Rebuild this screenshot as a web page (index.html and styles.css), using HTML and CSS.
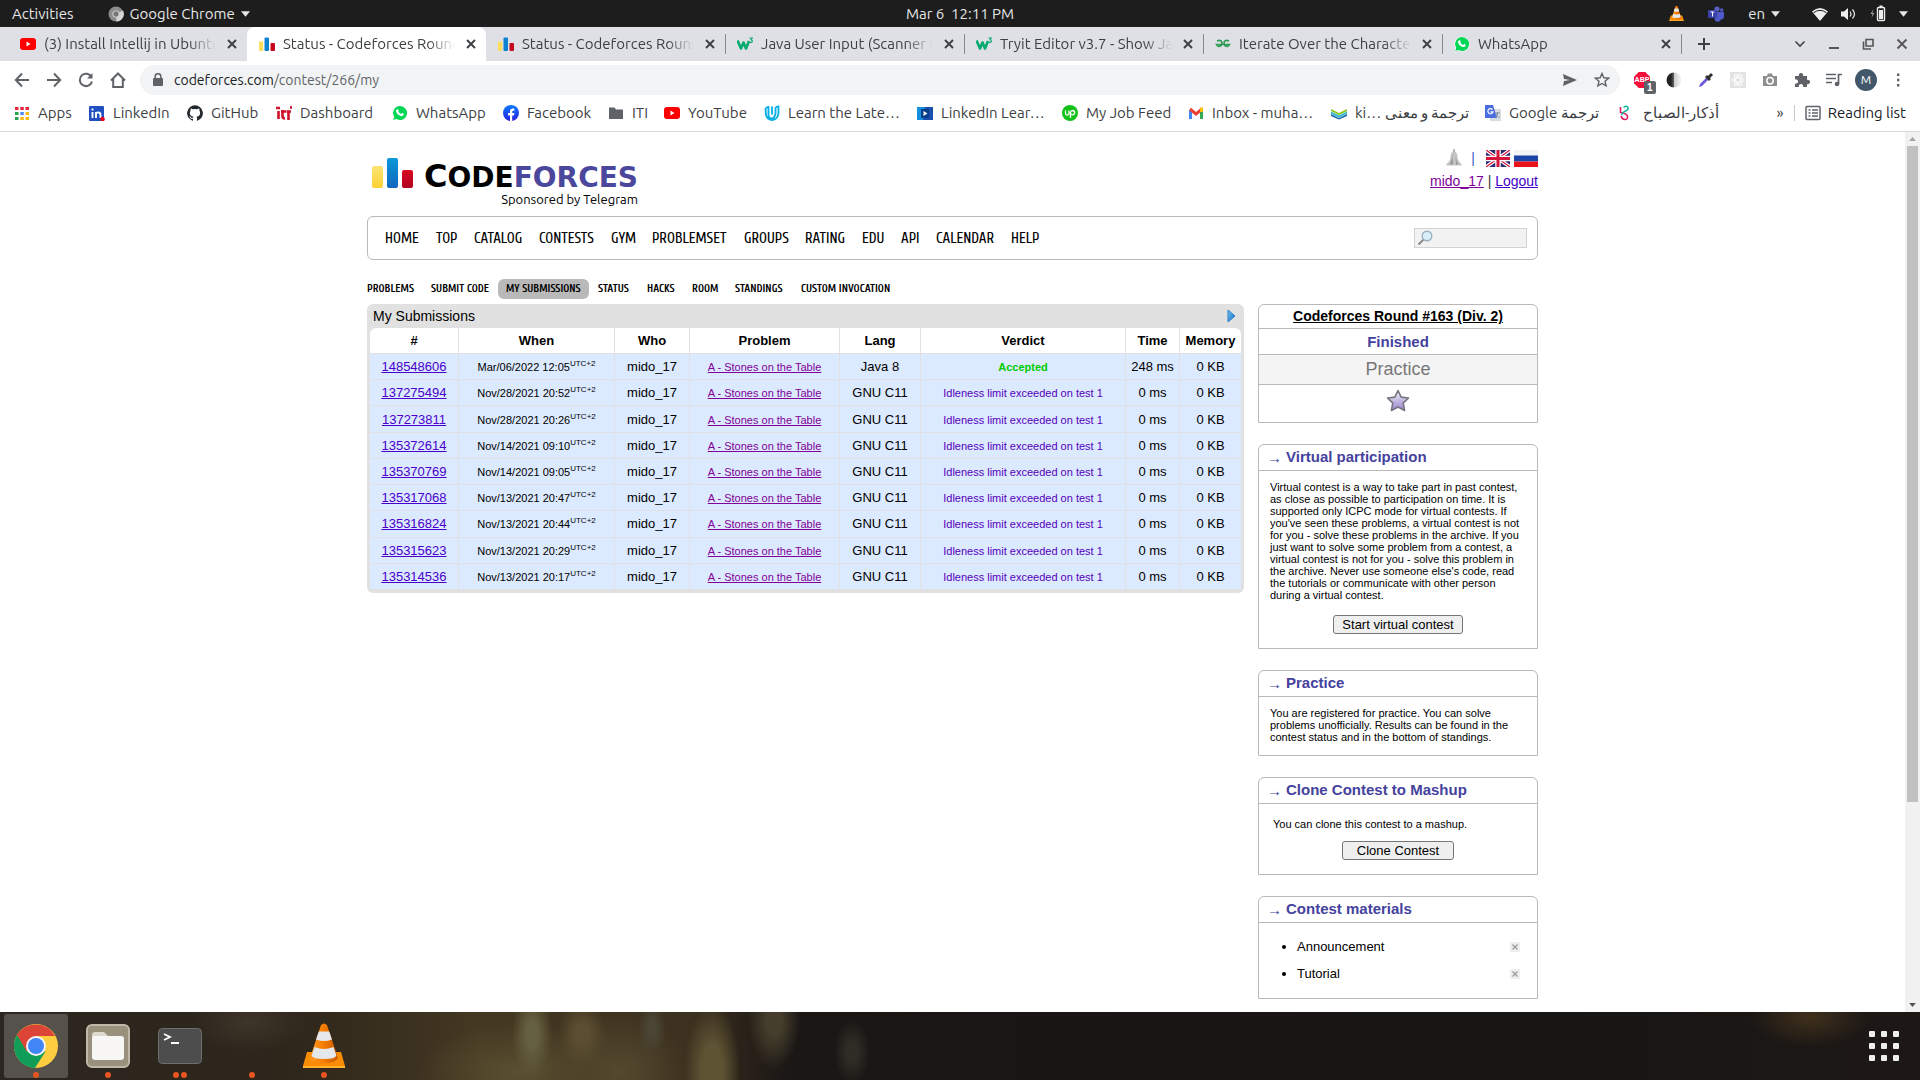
FILE: index.html
```html
<!DOCTYPE html>
<html lang="en">
<head>
<meta charset="utf-8">
<title>Status - Codeforces Round #163 (Div. 2)</title>
<link rel="stylesheet" href="styles.css">
</head>
<body>
<svg class="defs" aria-hidden="true">
  <defs>
    <linearGradient id="gy" x2="0" y2="1"><stop stop-color="#fbe576"/><stop offset="1" stop-color="#fbd033"/></linearGradient>
    <linearGradient id="gb" x2="0" y2="1"><stop stop-color="#0a97d9"/><stop offset="1" stop-color="#1267bd"/></linearGradient>
    <linearGradient id="gr" x2="0" y2="1"><stop stop-color="#d80a22"/><stop offset="1" stop-color="#b1031e"/></linearGradient>
    <linearGradient id="gstar" x2="0" y2="1"><stop stop-color="#efeff4"/><stop offset="1" stop-color="#9784d0"/></linearGradient>
    <linearGradient id="gfb" x2="0" y2="1"><stop stop-color="#0a7cff"/><stop offset="1" stop-color="#2a1fe0"/></linearGradient>
    <linearGradient id="gcone" x2="1" y2="0"><stop stop-color="#ff9a1f"/><stop offset=".5" stop-color="#f57c00"/><stop offset="1" stop-color="#c85a00"/></linearGradient>
    <linearGradient id="gtri" x2="1" y2="1"><stop stop-color="#7cc4f2"/><stop offset="1" stop-color="#0c6fc4"/></linearGradient>
    <linearGradient id="ghalf" x2="1" y2="0"><stop offset=".3" stop-color="#222"/><stop offset=".5" stop-color="#666"/><stop offset=".52" stop-color="#ccc"/><stop offset="1" stop-color="#f6f6f6"/></linearGradient>
  </defs>
  <symbol id="i-yt" viewBox="0 0 16 16"><rect y="2" width="16" height="12" rx="3" fill="#f00"/><path d="M6.5 5.5v5l4-2.500z" fill="#fff"/></symbol>
  <symbol id="i-cf" viewBox="0 0 16 16"><rect y="5.500" width="4.200" height="9.500" rx="1" fill="#fbdc5c"/><rect x="5.500" y="1.500" width="4.500" height="13.500" rx="1" fill="#0f82cf"/><rect x="11.500" y="7" width="4.500" height="8" rx="1" fill="#c60620"/></symbol>
  <symbol id="i-w3" viewBox="0 0 16 16"><path d="M.5 4.500l3.500 8 2.500-6 2.500 6 3-7.500" fill="none" stroke="#04aa6d" stroke-width="2.600" stroke-linejoin="round"/><path d="M12.500 2h3l-1.500 1.700q1.600.4 1.300 1.800-.6 1.300-2.600.7" fill="none" stroke="#04aa6d" stroke-width="1.100"/></symbol>
  <symbol id="i-gfg" viewBox="0 0 16 16"><path d="M2 5q3.500-1.500 4.800.8.600 2-.8 3.900Q2.800 11.500 1.500 8.500h13Q13.200 11.500 10 9.700 8.600 8 9.200 5.800q1.300-2.300 4.800-.8" fill="none" stroke="#2f9d56" stroke-width="1.700"/></symbol>
  <symbol id="i-wa" viewBox="0 0 16 16"><path d="M8 .5a7.500 7.500 0 1 1-3.700 14L.5 15.500l1-3.700A7.500 7.500 0 0 1 8 .5z" fill="#fff"/><path d="M8 1a7 7 0 1 1-3.500 13l-3.300.9 1-3.200A7 7 0 0 1 8 1z" fill="#00d757"/><path d="M5.300 4.200q1-.3 1.500 1.400l-.5 1q1 1.700 2.900 2.400l.8-.9q2 .5 1.700 1.300-.6 1.900-2.800 1.500-4-1.200-5-5 .2-1.500 1.400-1.700z" fill="#fff"/></symbol>
  <symbol id="i-x" viewBox="0 0 16 16"><path d="M4 4l8 8M12 4l-8 8" stroke="currentColor" stroke-width="1.900"/></symbol>
  <symbol id="i-vlc" viewBox="0 0 44 46"><path d="M5 29h34l4 14v2H1v-2z" fill="#f98c05"/><path d="M1 43h42v2H1z" fill="#ffb32c"/><path d="M19 2q3-3 6 0l11 33q-2 5-14 5T8 35z" fill="url(#gcone)"/><path d="M16.800 8.500h10.400l2.800 8q-8 3-16 0zM12.600 24q9.400 4 18.800 0l3 8.500q-1 3.500-12.400 3.500T9.600 32.500z" fill="#e4e8ea"/></symbol>
  <symbol id="i-caret" viewBox="0 0 10 6"><path d="M0 0h10L5 6z" fill="currentColor"/></symbol>
</svg>

<header class="topbar">
  <div class="topbar-left">
    <a href="#">Activities</a>
    <a href="#" class="appmenu"><svg width="16" height="16" viewBox="0 0 16 16"><circle cx="8" cy="8" r="7.500" fill="#8c8c8c"/><path d="M8 8l7-3.500A7.500 7.500 0 0 1 8.500 15.500z" fill="#d5d5d5"/><circle cx="8" cy="8" r="3.600" fill="#ddd"/><circle cx="8" cy="8" r="2.700" fill="#777"/></svg>Google Chrome<svg width="9" height="6"><use href="#i-caret"/></svg></a>
  </div>
  <time>Mar 6&nbsp; 12:11 PM</time>
  <div class="tray">
    <svg class="vlc" width="15" height="17"><use href="#i-vlc"/></svg>
    <svg class="teams" width="16" height="16" viewBox="0 0 16 16"><circle cx="9" cy="3" r="2.600" fill="#5b62c4"/><circle cx="13.700" cy="4" r="1.800" fill="#5059c9"/><path d="M6 6h10v5q-1 3-3 2.500Q11 17 7 15z" fill="#5059c9"/><rect y="4" width="9" height="8" rx="1" fill="#3a41a8"/><path d="M2.500 6h4M4.500 6v4.500" stroke="#fff"/></svg>
    <span class="lang">en<svg width="9" height="6"><use href="#i-caret"/></svg></span>
    <svg class="wifi" width="16" height="14" viewBox="0 0 16 14"><path d="M0 4.500Q8-2.500 16 4.500L8 14z" fill="#eee"/><path d="M1.500 5.800Q8 .8 14.500 5.800" fill="none" stroke="#1d1d1d"/></svg>
    <svg width="16" height="14" viewBox="0 0 16 14"><path d="M0 4.500h3L7 1v12L3 9.500H0z" fill="#eee"/><path d="M9 4.500q2 2.500 0 5M11.500 2.500q4 4.500 0 9" fill="none" stroke="#eee" stroke-width="1.200"/></svg>
    <svg width="16" height="17" viewBox="0 0 16 17"><path d="M3.500 4L.500 9h2l-1 4 3-5h-2z" fill="#999"/><rect x="7.500" y="2.500" width="7" height="13" rx="1" fill="none" stroke="#eee" stroke-width="1.400"/><path d="M9 5h4v9H9zM9.500.500h3v1.500h-3z" fill="#eee"/></svg>
    <svg width="9" height="6"><use href="#i-caret"/></svg>
  </div>
</header>

<div class="tabstrip">
  <div class="tab"><svg class="fav"><use href="#i-yt"/></svg><span>(3) Install Intellij in Ubuntu</span><svg class="close"><use href="#i-x"/></svg></div>
  <div class="tab active"><svg class="fav"><use href="#i-cf"/></svg><span>Status - Codeforces Round</span><svg class="close"><use href="#i-x"/></svg></div>
  <div class="tab"><svg class="fav"><use href="#i-cf"/></svg><span>Status - Codeforces Round</span><svg class="close"><use href="#i-x"/></svg></div>
  <div class="tab line"><svg class="fav"><use href="#i-w3"/></svg><span>Java User Input (Scanner c</span><svg class="close"><use href="#i-x"/></svg></div>
  <div class="tab line"><svg class="fav"><use href="#i-w3"/></svg><span>Tryit Editor v3.7 - Show Jav</span><svg class="close"><use href="#i-x"/></svg></div>
  <div class="tab line"><svg class="fav"><use href="#i-gfg"/></svg><span>Iterate Over the Character</span><svg class="close"><use href="#i-x"/></svg></div>
  <div class="tab line"><svg class="fav"><use href="#i-wa"/></svg><span>WhatsApp</span><svg class="close"><use href="#i-x"/></svg></div>
  <div class="newtab"><svg width="14" height="14" viewBox="0 0 14 14"><path d="M7 1v12M1 7h12" stroke="#3c4043" stroke-width="2"/></svg></div>
  <div class="winctl">
    <svg width="12" height="12" viewBox="0 0 12 12"><path d="M1.500 3.500L6 8l4.500-4.500" fill="none" stroke="#444" stroke-width="1.600"/></svg>
    <svg width="12" height="12" viewBox="0 0 12 12"><path d="M1 10h10" stroke="#555" stroke-width="2"/></svg>
    <svg width="12" height="12" viewBox="0 0 12 12"><path d="M4 1.500h7v6.500H4zM1.500 3.500V11H9" fill="none" stroke="#555" stroke-width="1.600"/></svg>
    <svg width="12" height="12" viewBox="0 0 12 12"><path d="M1.500 1.500l9 9M10.500 1.500l-9 9" stroke="#555" stroke-width="1.800"/></svg>
  </div>
</div>

<div class="toolbar">
  <svg class="nav" viewBox="0 0 16 16"><path d="M15 8H2M8 1.500L1.800 8 8 14.500"/></svg>
  <svg class="nav" viewBox="0 0 16 16"><path d="M1 8h13M8 1.500L14.200 8 8 14.500"/></svg>
  <svg class="nav" viewBox="0 0 16 16"><path d="M13.500 5A6.200 6.200 0 1 0 14 9.500"/><path d="M14.500 1v5.500H9z" fill="#5f6368" stroke="none"/></svg>
  <svg class="nav" viewBox="0 0 16 16"><path d="M1 8.500L8 1.500l7 7M3.200 7v8h9.600V7"/></svg>
  <div class="omnibox">
    <svg width="10" height="14" viewBox="0 0 10 14"><rect y="5" width="10" height="8" rx="1" fill="#5f6368"/><path d="M2.200 6V3.500a2.800 2.800 0 0 1 5.600 0V6" fill="none" stroke="#5f6368" stroke-width="1.500"/></svg>
    <span class="url"><b>codeforces.com</b>/contest/266/my</span>
    <svg width="16" height="14" viewBox="0 0 16 14"><path d="M1 1l14 6L1 13l1-5 6-1-6-1z" fill="#5f6368"/></svg>
    <svg width="16" height="16" viewBox="0 0 16 16"><path d="M8 1.500l1.900 4.300 4.700.4-3.600 3.100 1.100 4.600L8 11.500l-4.100 2.400L5 9.300 1.400 6.200l4.700-.4z" fill="none" stroke="#5f6368" stroke-width="1.400"/></svg>
  </div>
  <div class="exts">
    <div class="abp"><svg width="17" height="17" viewBox="0 0 17 17"><path d="M5 0h7l5 5v7l-5 5H5l-5-5V5z" fill="#f5103c"/></svg><i>ABP</i><em>1</em></div>
    <svg viewBox="0 0 16 16"><circle cx="8" cy="8" r="7.500" fill="url(#ghalf)"/></svg>
    <svg viewBox="0 0 16 16"><path d="M1 15l1-3 7-7 2 2-7 7z" fill="#6a5bd8"/><path d="M8 4l4 4M10 6l4-4" stroke="#333" stroke-width="3"/></svg>
    <svg viewBox="0 0 16 16"><rect width="16" height="16" fill="#e3e3e3"/><g fill="none" stroke="#fff"><ellipse cx="8" cy="8" rx="6" ry="2.400"/><ellipse cx="8" cy="8" rx="6" ry="2.400" transform="rotate(60 8 8)"/><ellipse cx="8" cy="8" rx="6" ry="2.400" transform="rotate(120 8 8)"/></g></svg>
    <svg viewBox="0 0 16 16"><path d="M1 4h4l1-2.500h4L11 4h4v10H1z" fill="#8e8e8e"/><circle cx="8" cy="8.800" r="3.200" fill="#8e8e8e" stroke="#fff" stroke-width="1.500"/></svg>
    <svg viewBox="0 0 16 16"><path d="M1 4h4a2.200 2.200 0 1 1 4 0h4v4a2.200 2.200 0 1 1 0 4v3H9a2.200 2.200 0 1 0-4 0H1v-3.500a2.200 2.200 0 1 0 0-4z" fill="#5f6368"/></svg>
    <svg viewBox="0 0 16 16"><path d="M0 2.500h10M0 6.500h10M0 10.500h6M12.500 12V2.500H16" fill="none" stroke="#5f6368" stroke-width="1.700"/><circle cx="11" cy="12" r="2.300" fill="#5f6368"/></svg>
    <span class="avatar">M</span>
    <svg viewBox="0 0 16 16"><path d="M7 1.500h2.400v2.400H7zM7 6.800h2.400v2.400H7zM7 12.100h2.400v2.400H7z" fill="#5f6368"/></svg>
  </div>
</div>

<nav class="bookmarks">
  <a href="#"><svg viewBox="0 0 16 16"><path d="M1 2h3.500v3H1zM6.300 2h3.500v3H6.300zM11.500 2H15v3h-3.500z" fill="#e8243c"/><path d="M1 7h3.500v3H1zM1 12h3.500v3H1z" fill="#26a251"/><path d="M6.300 7h3.500v3H6.300z" fill="#4c8bf5"/><path d="M11.500 7H15v3h-3.500zM6.300 12h3.500v3H6.300zM11.500 12H15v3h-3.500z" fill="#fbb911"/></svg>Apps</a>
  <a href="#"><svg viewBox="0 0 16 16"><rect width="15" height="15" y="1" rx="1" fill="#1f4fc0"/><path d="M3.500 7v6M3.500 3.500v2M7 13V7M7 10q0-3 2.500-2.500 2 0 2 2.500v3" fill="none" stroke="#fff" stroke-width="1.900"/><circle cx="13.500" cy="14" r="2.300" fill="#e60023"/></svg>LinkedIn</a>
  <a href="#"><svg viewBox="0 0 16 16"><path d="M8 .3a7.900 7.900 0 0 0-2.500 15.400c.4.100.5-.2.500-.4v-1.500c-2.200.5-2.700-.9-2.700-.9-.4-.9-.9-1.200-.9-1.200-.7-.5.100-.5.100-.5.800.1 1.200.8 1.200.8.700 1.200 1.900.9 2.300.7.100-.5.300-.9.500-1.100-1.800-.2-3.600-.9-3.600-3.900 0-.9.300-1.600.8-2.100-.1-.2-.4-1 .1-2.100 0 0 .7-.2 2.200.8a7.500 7.500 0 0 1 4 0c1.500-1 2.200-.8 2.200-.8.400 1.100.2 1.900.1 2.100.5.600.8 1.300.8 2.100 0 3.100-1.900 3.700-3.700 3.900.3.300.6.800.6 1.500v2.200c0 .2.100.5.500.4A7.900 7.900 0 0 0 8 .3z" fill="#24292e"/></svg>GitHub</a>
  <a href="#"><svg viewBox="0 0 16 16"><path d="M2.500 6v8M0 3h4M6.500 5v6q0 2.500 2.500 2.500M5 6.500h5M12.500 7v8M10.500 6.500h4.500M14 2.500h2" fill="none" stroke="#d0112b" stroke-width="2.600"/></svg>Dashboard</a>
  <a href="#"><svg><use href="#i-wa"/></svg>WhatsApp</a>
  <a href="#"><svg viewBox="0 0 16 16"><circle cx="8" cy="8" r="8" fill="url(#gfb)"/><path d="M7 16v-5.500H5V8h2V6.300Q7.100 3.500 9.800 3.500h1.600v2.200h-1.200q-1 0-1 1V8h2.200l-.4 2.500H9.200V16z" fill="#fff"/></svg>Facebook</a>
  <a href="#"><svg viewBox="0 0 16 16"><path d="M1 2.500h5.500l1.500 2h7v9.500H1z" fill="#5f6368"/></svg>ITI</a>
  <a href="#"><svg><use href="#i-yt"/></svg>YouTube</a>
  <a href="#"><svg viewBox="0 0 16 16"><path d="M1.500 4q1.500-2.500 3-2v7.500q0 4 3 4t4-5V3q1.500-2 3-1.500V8q-.5 6-6 7-5 0-6.500-5zM8 1.500v8" fill="none" stroke="#0bb0e6" stroke-width="1.900"/></svg>Learn the Late…</a>
  <a href="#"><svg viewBox="0 0 16 16"><rect y="2" width="16" height="13" fill="#1490df"/><path d="M8 2h8v13H6z" fill="#1b4fae"/><rect x="4" y="4" width="8" height="9" fill="#073f86"/><path d="M6.500 6v5l4-2.500z" fill="#fff"/></svg>LinkedIn Lear…</a>
  <a href="#"><svg viewBox="0 0 16 16"><circle cx="8" cy="8" r="8" fill="#14c01a"/><path d="M3.500 5.500v3q.2 1.700 1.800 1.700 1.500 0 1.700-1.700v-3M8.500 13V7.500q.3-2 2.200-2 2 .2 2 2.200-.2 2-2 2.100-1.500 0-2.800-2.300" fill="none" stroke="#fff" stroke-width="1.300"/></svg>My Job Feed</a>
  <a href="#"><svg viewBox="0 0 16 16"><path d="M2.500 14V5" stroke="#4285f4" stroke-width="3"/><path d="M13.500 14V5" stroke="#34a853" stroke-width="3"/><path d="M2 4l6 5 6-5" fill="none" stroke="#ea4335" stroke-width="3"/><path d="M12 2.500h3V7h-3z" fill="#fbbc04"/></svg>Inbox - muha…</a>
  <a href="#"><svg viewBox="0 0 16 16"><path d="M0 4l8 4 8-4v2l-8 4-8-4z" fill="#8fc31f"/><path d="M0 6.500l8 4 8-4v2l-8 4-8-4z" fill="#29b6c8"/><path d="M0 9l8 4 8-4v2l-8 3.500L0 11z" fill="#1565a8"/></svg>ki… ترجمة و معنى</a>
  <a href="#"><svg viewBox="0 0 16 16"><rect x="5" y="4" width="11" height="12" fill="#d8dce0"/><path d="M0 0h8l4 13H0z" fill="#4a6ee0"/><path d="M7.500 4.500A2.600 2.600 0 1 0 8 6.800H5.500" fill="none" stroke="#fff" stroke-width="1.200"/><path d="M10 8h5M12.500 7v1q0 3-2 4.500M11 9q1 2 3.500 3.500" fill="none" stroke="#8090a0"/></svg><span dir="rtl">ترجمة Google</span></a>
  <a href="#"><svg viewBox="0 0 16 16"><path d="M1.500 2v5.500q5.500.5 7 3.500.5 3.500-2.500 3.500T2 11" fill="none" stroke="#e0205c" stroke-width="1.600"/><path d="M2.500 10q1-3 4-4t2.500-3.500Q7.500 0 4.500 2.500" fill="none" stroke="#12b5a6" stroke-width="1.500"/></svg>أذكار-الصباح</a>
  <span class="more">»</span>
  <a href="#" class="reading"><svg viewBox="0 0 16 16"><rect x="1" y="1.500" width="14" height="13" rx="1" fill="none" stroke="#5f6368" stroke-width="1.500"/><path d="M3.500 5h2M7 5h6M3.500 8h2M7 8h6M3.500 11h2M7 11h6" stroke="#5f6368" stroke-width="1.300"/></svg>Reading list</a>
</nav>

<div class="viewport">
<div class="page">
  <header class="site-head">
    <a href="#" class="logo">
      <svg width="41" height="31" viewBox="0 0 41 31"><rect y="8" width="11" height="22" rx="2" fill="url(#gy)"/><rect x="15" width="11" height="30" rx="2" fill="url(#gb)"/><rect x="30" y="12" width="11" height="18" rx="2" fill="url(#gr)"/></svg>
      <span class="logo-text"><span class="word"><span class="cap">C</span>ODE<span class="blue">FORCES</span></span><span class="sponsor">Sponsored by Telegram</span></span>
    </a>
    <div class="account">
      <div class="flags">
        <svg width="16" height="18" viewBox="0 0 16 18"><path d="M8 2q3.500 1 3.500 6 .3 4 4 7v1.500H.500V15q3.700-3 4-7 0-5 3.500-6z" fill="#c4c4c4"/><path d="M6.500 4q0 7-3 11.500h3.500zM9.500 4q0 7 3 11.500H10z" fill="#999"/><path d="M8 0v3" stroke="#aaa" stroke-width="1.500"/></svg>
        <span class="bar">|</span>
        <svg width="24" height="17" viewBox="0 0 24 17"><rect width="24" height="17" fill="#2d2a6e"/><path d="M0 0l24 17M24 0L0 17" stroke="#fff" stroke-width="3.500"/><path d="M0 0l24 17M24 0L0 17" stroke="#d8143a" stroke-width="1.200"/><path d="M12 0v17M0 8.500h24" stroke="#fff" stroke-width="5.500"/><path d="M12 0v17M0 8.500h24" stroke="#d8143a" stroke-width="3"/></svg>
        <svg width="24" height="17" viewBox="0 0 24 17"><rect width="24" height="17" fill="#f4f4f6"/><path d="M0 5.500h24v6H0z" fill="#1c45a8"/><path d="M0 11.500h24V17H0z" fill="#e8121a"/></svg>
      </div>
      <div><a href="#" class="visited">mido_17</a> | <a href="#">Logout</a></div>
    </div>
  </header>

  <div class="mainmenu">
    <nav><a href="#">HOME</a><a href="#">TOP</a><a href="#">CATALOG</a><a href="#">CONTESTS</a><a href="#">GYM</a><a href="#">PROBLEMSET</a><a href="#">GROUPS</a><a href="#">RATING</a><a href="#">EDU</a><a href="#">API</a><a href="#">CALENDAR</a><a href="#">HELP</a></nav>
    <label class="search"><svg width="16" height="16" viewBox="0 0 16 16"><path d="M1.500 14.500L7 9" stroke="#8a8a8a" stroke-width="2"/><circle cx="10" cy="6" r="4.800" fill="#d8f0fb" stroke="#9bb0bd" stroke-width="1.400"/></svg><input type="text" aria-label="Search"></label>
  </div>

  <nav class="submenu"><a href="#">PROBLEMS</a><a href="#">SUBMIT CODE</a><a href="#" class="current">MY SUBMISSIONS</a><a href="#">STATUS</a><a href="#">HACKS</a><a href="#">ROOM</a><a href="#">STANDINGS</a><a href="#">CUSTOM INVOCATION</a></nav>

  <div class="columns">
    <main class="datatable">
      <div class="caption"><span>My Submissions</span><svg width="9" height="14" viewBox="0 0 9 14"><path d="M1 1l7 6-7 6z" fill="url(#gtri)" stroke="#2a7fc9"/></svg></div>
      <table>
        <colgroup><col class="c-id"><col class="c-when"><col class="c-who"><col class="c-problem"><col class="c-lang"><col><col class="c-time"><col class="c-mem"></colgroup>
        <thead><tr><th>#</th><th>When</th><th>Who</th><th>Problem</th><th>Lang</th><th>Verdict</th><th>Time</th><th>Memory</th></tr></thead>
        <tbody>
          <tr><td><a href="#">148548606</a></td><td class="small">Mar/06/2022 12:05<sup>UTC+2</sup></td><td>mido_17</td><td class="small"><a href="#" class="visited">A - Stones on the Table</a></td><td>Java 8</td><td class="small ok">Accepted</td><td>248 ms</td><td>0 KB</td></tr>
          <tr><td><a href="#">137275494</a></td><td class="small">Nov/28/2021 20:52<sup>UTC+2</sup></td><td>mido_17</td><td class="small"><a href="#" class="visited">A - Stones on the Table</a></td><td>GNU C11</td><td class="small fail">Idleness limit exceeded on test 1</td><td>0 ms</td><td>0 KB</td></tr>
          <tr><td><a href="#">137273811</a></td><td class="small">Nov/28/2021 20:26<sup>UTC+2</sup></td><td>mido_17</td><td class="small"><a href="#" class="visited">A - Stones on the Table</a></td><td>GNU C11</td><td class="small fail">Idleness limit exceeded on test 1</td><td>0 ms</td><td>0 KB</td></tr>
          <tr><td><a href="#">135372614</a></td><td class="small">Nov/14/2021 09:10<sup>UTC+2</sup></td><td>mido_17</td><td class="small"><a href="#" class="visited">A - Stones on the Table</a></td><td>GNU C11</td><td class="small fail">Idleness limit exceeded on test 1</td><td>0 ms</td><td>0 KB</td></tr>
          <tr><td><a href="#">135370769</a></td><td class="small">Nov/14/2021 09:05<sup>UTC+2</sup></td><td>mido_17</td><td class="small"><a href="#" class="visited">A - Stones on the Table</a></td><td>GNU C11</td><td class="small fail">Idleness limit exceeded on test 1</td><td>0 ms</td><td>0 KB</td></tr>
          <tr><td><a href="#">135317068</a></td><td class="small">Nov/13/2021 20:47<sup>UTC+2</sup></td><td>mido_17</td><td class="small"><a href="#" class="visited">A - Stones on the Table</a></td><td>GNU C11</td><td class="small fail">Idleness limit exceeded on test 1</td><td>0 ms</td><td>0 KB</td></tr>
          <tr><td><a href="#">135316824</a></td><td class="small">Nov/13/2021 20:44<sup>UTC+2</sup></td><td>mido_17</td><td class="small"><a href="#" class="visited">A - Stones on the Table</a></td><td>GNU C11</td><td class="small fail">Idleness limit exceeded on test 1</td><td>0 ms</td><td>0 KB</td></tr>
          <tr><td><a href="#">135315623</a></td><td class="small">Nov/13/2021 20:29<sup>UTC+2</sup></td><td>mido_17</td><td class="small"><a href="#" class="visited">A - Stones on the Table</a></td><td>GNU C11</td><td class="small fail">Idleness limit exceeded on test 1</td><td>0 ms</td><td>0 KB</td></tr>
          <tr><td><a href="#">135314536</a></td><td class="small">Nov/13/2021 20:17<sup>UTC+2</sup></td><td>mido_17</td><td class="small"><a href="#" class="visited">A - Stones on the Table</a></td><td>GNU C11</td><td class="small fail">Idleness limit exceeded on test 1</td><td>0 ms</td><td>0 KB</td></tr>
        </tbody>
      </table>
    </main>

    <aside class="sidebar">
      <section class="box contest">
        <a href="#" class="contest-name">Codeforces Round #163 (Div. 2)</a>
        <div class="state">Finished</div>
        <div class="mode">Practice</div>
        <div class="star"><svg width="24" height="24" viewBox="0 0 24 24"><path d="M12 1.500l3.200 6.600 7.300.9-5.300 5.100 1.400 7.400L12 18l-6.600 3.500 1.400-7.400L1.500 9l7.300-.9z" fill="url(#gstar)" stroke="#77757f" stroke-width="1.600" stroke-linejoin="round"/></svg></div>
      </section>
      <section class="box">
        <h2><i>→</i>Virtual participation</h2>
        <div class="body virtual">
          <p>Virtual contest is a way to take part in past contest, as close as possible to participation on time. It is supported only ICPC mode for virtual contests. If you've seen these problems, a virtual contest is not for you - solve these problems in the archive. If you just want to solve some problem from a contest, a virtual contest is not for you - solve this problem in the archive. Never use someone else's code, read the tutorials or communicate with other person during a virtual contest.</p>
          <button type="button">Start virtual contest</button>
        </div>
      </section>
      <section class="box">
        <h2><i>→</i>Practice</h2>
        <div class="body"><p>You are registered for practice. You can solve problems unofficially. Results can be found in the contest status and in the bottom of standings.</p></div>
      </section>
      <section class="box">
        <h2><i>→</i>Clone Contest to Mashup</h2>
        <div class="body clone"><p>You can clone this contest to a mashup.</p><button type="button">Clone Contest</button></div>
      </section>
      <section class="box">
        <h2><i>→</i>Contest materials</h2>
        <ul>
          <li><div><a href="#">Announcement</a><svg><use href="#i-x"/></svg></div></li>
          <li><div><a href="#">Tutorial</a><svg><use href="#i-x"/></svg></div></li>
        </ul>
      </section>
    </aside>
  </div>
</div>
<div class="scrollbar"><svg width="7" height="4" viewBox="0 0 10 6"><path d="M0 6h10L5 0z" fill="#a3a3a3"/></svg><div class="thumb"></div><svg width="7" height="4"><use href="#i-caret"/></svg></div>
</div>

<footer class="dock">
  <div class="app on"><svg width="44" height="44" viewBox="0 0 44 44"><circle cx="22" cy="22" r="22" fill="#ffcd40"/><path d="M2.950 11A22 22 0 0 0 21 44l10.500-16.500H13z" fill="#0f9d58"/><path d="M2.950 11A22 22 0 0 1 41.050 12H22L12.500 27.500z" fill="#db4437"/><path d="M2.950 11l9.550 16.500 4 4-10 4z" fill="#0f9d58"/><circle cx="22" cy="22" r="10" fill="#f4f4f4"/><circle cx="22" cy="22" r="8" fill="#4285f4"/></svg><div class="dots"><b></b></div></div>
  <div class="app"><svg width="44" height="44" viewBox="0 0 44 44"><rect x="1" y="1" width="42" height="42" rx="5" fill="#9a917c" stroke="#c0b9a9" stroke-width="2"/><path d="M6 11q0-3 3-3h9l4 4v6H6z" fill="#dedad0"/><rect x="6" y="12" width="32" height="24" rx="3" fill="#f8f7f5"/></svg><div class="dots"><b></b></div></div>
  <div class="app"><svg width="44" height="44" viewBox="0 0 44 44"><rect x=".5" y="4.500" width="43" height="35" rx="4" fill="#4d4d4d" stroke="#6f6f6f"/><path d="M6 10l6 3-6 3M13 19h8" fill="none" stroke="#fff" stroke-width="1.800"/></svg><div class="dots"><b></b><b></b></div></div>
  <div class="app"><div class="dots"><b></b></div></div>
  <div class="app"><svg width="44" height="46"><use href="#i-vlc"/></svg><div class="dots"><b></b></div></div>
  <svg class="grid" width="30" height="30" viewBox="0 0 30 30" fill="#eee"><rect width="6" height="6" rx="1"/><rect x="12" width="6" height="6" rx="1"/><rect x="24" width="6" height="6" rx="1"/><rect y="12" width="6" height="6" rx="1"/><rect x="12" y="12" width="6" height="6" rx="1"/><rect x="24" y="12" width="6" height="6" rx="1"/><rect y="24" width="6" height="6" rx="1"/><rect x="12" y="24" width="6" height="6" rx="1"/><rect x="24" y="24" width="6" height="6" rx="1"/></svg>
</footer>
</body>
</html>
```
FILE: styles.css
```css
* { box-sizing: border-box; }
body {
  margin: 0;
  min-height: 100vh;
  display: flex;
  flex-direction: column;
  background: #fff;
  color: #000;
  font: 13px/16px "Liberation Sans", Arial, sans-serif;
}
a { color: inherit; text-decoration: none; }
svg { display: block; flex: none; }
.defs { width: 0; height: 0; position: absolute; }

/* desktop bar */
.topbar, .tabstrip, .toolbar, .bookmarks { font-family: Ubuntu, "Noto Sans", sans-serif; font-size: 15px; }
.topbar {
  display: grid;
  grid-template-columns: 1fr auto 1fr;
  align-items: center;
  height: 27px;
  padding: 0 12px;
  background: #1d1d1d;
  color: #e6e6e6;
}
.topbar-left, .appmenu, .tray, .lang { display: flex; align-items: center; }
.topbar-left { gap: 34px; }
.appmenu { gap: 6px; }
.tray { justify-content: flex-end; gap: 13px; }
.teams { margin: 0 11px; }
.lang { gap: 6px; margin-right: 19px; }

/* tabs */
.tabstrip { display: flex; height: 34px; padding-left: 8px; background: #dee0e6; color: #3c4043; }
.tab { flex: 0 1 239px; min-width: 0; display: flex; align-items: center; gap: 8px; padding: 0 7px 0 12px; }
.tab.active { background: #fff; border-radius: 8px 8px 0 0; }
.tab.line { background: linear-gradient(#85888c, #85888c) 0 50% / 1px 20px no-repeat; }
.tab span { flex: 1; overflow: hidden; white-space: nowrap; -webkit-mask-image: linear-gradient(90deg, #000 84%, transparent); mask-image: linear-gradient(90deg, #000 84%, transparent); }
.fav, .close { width: 16px; height: 16px; }
.newtab { display: flex; align-items: center; padding-left: 15px; border-left: 1px solid #85888c; margin: 7px 0; }
.winctl { margin-left: auto; display: flex; align-items: center; gap: 22px; padding-right: 12px; }

/* toolbar */
.toolbar { display: flex; align-items: center; height: 37px; padding: 0 14px; gap: 16px; }
.nav { width: 16px; height: 16px; fill: none; stroke: #5f6368; stroke-width: 2; }
.omnibox { flex: 1; min-width: 0; height: 30px; display: flex; align-items: center; gap: 16px; margin: 0 -2px; padding: 0 10px 0 13px; border-radius: 15px; background: #f1f3f4; color: #5f6368; font-size: 14px; }
.url { flex: 1; margin-left: -5px; }
.url b { font-weight: 400; color: #202124; }
.exts { display: flex; align-items: center; gap: 16px; }
.exts svg { width: 16px; height: 16px; }
.abp { position: relative; }
.abp i { position: absolute; inset: 4px 0 auto; font: bold 7px/8px "Liberation Sans", sans-serif; color: #fff; text-align: center; }
.abp em { position: absolute; left: 10px; top: 9px; padding: 0 3px; border-radius: 2px; background: #5f6368; color: #fff; font: bold 10px/13px "Liberation Sans", sans-serif; }
.avatar { width: 22px; height: 22px; margin: 0 -3px; border-radius: 50%; background: #42586a; color: #fff; font-size: 12px; line-height: 22px; text-align: center; }

/* bookmarks */
.bookmarks {
  display: grid;
  grid-template-columns: 75px 98px 89px 116px 111px 105px 56px 100px 153px 145px 126px 143px 154px 134px 1fr auto auto;
  align-items: center;
  height: 34px;
  padding: 0 14px 3px 14px;
  border-bottom: 1px solid #d6d8db;
  color: #3c4043;
  white-space: nowrap;
}
.bookmarks a { display: flex; align-items: center; gap: 8px; }
.bookmarks svg { width: 16px; height: 16px; }
.more { padding: 0 10px; }
.bookmarks .reading { gap: 7px; border-left: 1px solid #c6c8cb; padding-left: 10px; color: #202124; }

/* web page */
.viewport { flex: 1; display: flex; }
.page { flex: 1; max-width: 1171px; margin: 0 auto; }
.scrollbar { width: 15px; display: flex; flex-direction: column; align-items: center; gap: 5px; padding: 5px 0; background: #f1f1f1; color: #505050; }
.thumb { width: 11px; height: 656px; background: #c1c1c1; margin-bottom: auto; }

.site-head { display: flex; justify-content: space-between; padding: 17px 0 0; height: 84px; }
.logo { display: flex; gap: 11px; padding: 9px 0 0 5px; }
.logo-text { display: flex; flex-direction: column; align-items: flex-end; padding-top: 4px; }
.word { font: bold 28px/28px "Copperplate Gothic Bold", "DejaVu Sans", sans-serif; }
.cap { font-size: 32px; }
.blue { color: #4a479c; }
.sponsor { font: 13px/14px Ubuntu, "Open Sans", sans-serif; }
.account { text-align: right; font-size: 14px; color: #333; }
.account a { color: #4300c8; text-decoration: underline; }
.account .visited { color: #800098; }
.flags { display: flex; align-items: center; justify-content: flex-end; gap: 4px; margin-bottom: 6px; }
.bar { color: #3a5fc0; margin: 0 7px 0 5px; }

.mainmenu { display: flex; align-items: center; justify-content: space-between; height: 44px; padding: 0 10px 0 17px; border: 1px solid #b9b9b9; border-radius: 6px; }
.mainmenu nav { display: grid; grid-template-columns: 51px 38px 65px 72px 41px 92px 61px 57px 39px 35px 75px auto; padding-top: 2px; font: 15px/20px Cuprum, "Roboto Condensed", "Open Sans Condensed", "Liberation Sans Narrow", sans-serif; }
.search { display: flex; align-items: center; width: 113px; height: 20px; padding-left: 2px; border: 1px solid #d3d3d3; background: #f2f2f2; }
.search input { width: 90px; height: 18px; border: 0; background: none; }

.submenu { display: grid; grid-template-columns: 64px 75px 92px 49px 45px 43px 66px auto; justify-items: start; margin: 19px 0 5px; font: bold 11px/20px Cuprum, "Roboto Condensed", "Open Sans Condensed", "Liberation Sans Narrow", sans-serif; }
.current { margin: 0 -8px; padding: 0 8px; border-radius: 6px; background: #b9b9b9; }

.columns { display: flex; align-items: flex-start; gap: 14px; }
.datatable { flex: 1; min-width: 0; padding: 0 3px 3px; border-radius: 6px; background: #e1e1e1; }
.caption { display: flex; align-items: center; justify-content: space-between; height: 24px; padding: 0 5px 0 3px; font-size: 14px; }
table { width: 100%; height: 262px; table-layout: fixed; border-collapse: separate; border-spacing: 0; }
th, td { padding: 0; text-align: center; vertical-align: middle; border: 0 solid #e1e1e1; border-width: 0 1px 1px 0; white-space: nowrap; }
th { height: 26px; background: #fff; }
th:first-child { border-top-left-radius: 6px; }
th:last-child { border-top-right-radius: 6px; }
th:last-child, td:last-child { border-right: 0; }
td { padding-top: 1px; background: #dceaff; }
td a { color: #4a00cc; text-decoration: underline; }
td a.visited { color: #800098; }
.small { font-size: 11px; }
sup { font-size: 8px; line-height: 8px; }
.ok { color: #00cc00; font-weight: bold; }
.fail { color: #5500bb; }
.c-id { width: 89px; }
.c-when { width: 156px; }
.c-who { width: 75px; }
.c-problem { width: 150px; }
.c-lang { width: 81px; }
.c-time { width: 54px; }
.c-mem { width: 61px; }

.sidebar { width: 280px; display: flex; flex-direction: column; gap: 21px; }
.box { border: 1px solid #b9b9b9; border-radius: 6px 6px 0 0; }
.contest { text-align: center; font-weight: bold; }
.contest-name { display: block; font-size: 14px; line-height: 23px; text-decoration: underline; }
.state { border-top: 1px solid #b9b9b9; font-size: 15px; line-height: 25px; color: #45429e; }
.mode { border: 1px solid #b9b9b9; border-width: 1px 0; background: #f4f4f4; font-size: 18px; line-height: 29px; font-weight: 400; color: #777; }
.star { display: flex; justify-content: center; padding: 4px 0 9px; }
h2 { margin: 0; padding: 0 0 2px 8px; border-bottom: 1px solid #b9b9b9; font-size: 15px; line-height: 23px; color: #45429e; display: flex; gap: 4px; }
h2 i { padding-top: 2px; font: 15px/21px "Liberation Sans", sans-serif; }
.body { padding: 10px 11px 12px; font-size: 11px; line-height: 12px; }
.body p { margin: 0; }
.virtual { padding-bottom: 14px; }
.clone { padding: 14px; }
button { display: block; margin: 14px auto 0; height: 19px; padding: 0 8px; border: 1px solid #767676; border-radius: 3px; background: #efefef; color: #000; font: 13px/15px "Liberation Sans", sans-serif; }
.clone button { margin-top: 11px; padding: 0 14px; }
ul { margin: 0; padding: 10px 17px 11px 38px; }
li { line-height: 27px; }
li div { display: flex; align-items: center; justify-content: space-between; }
li svg { width: 10px; height: 10px; background: #eee; color: #999; }

/* dock */
.dock {
  display: flex;
  align-items: center;
  gap: 8px;
  height: 68px;
  padding: 0 21px 0 4px;
  background:
    radial-gradient(ellipse 20px 44px at 532px 22px, #65603f 30%, transparent),
    radial-gradient(ellipse 24px 34px at 582px 22px, #5a4d30 30%, transparent),
    radial-gradient(ellipse 14px 28px at 652px 16px, #4a4534 30%, transparent),
    radial-gradient(ellipse 18px 32px at 852px 40px, #2f2c25 30%, transparent),
    radial-gradient(ellipse 26px 50px at 774px 8px, #453e2c 30%, transparent),
    radial-gradient(ellipse 28px 70px at 712px 60px, #5d5232 40%, transparent),
    radial-gradient(ellipse 70px 60px at 620px 60px, #544a2e, transparent),
    radial-gradient(ellipse 100px 50px at 520px 60px, #5a5030, transparent),
    radial-gradient(ellipse 60px 30px at 250px 10px, #3e352a, transparent),
    radial-gradient(ellipse 60px 30px at 1810px 5px, #40301c, transparent),
    linear-gradient(90deg, #2b2620, #2e261b 15%, #443822 25%, #3c301f 36%, #1b1715 41%, #191514 60%, #171615 80%, #1d1815);
}
.app { width: 64px; height: 64px; display: flex; flex-direction: column; align-items: center; justify-content: center; border-radius: 3px; position: relative; }
.app.on { background: #ffffff33; }
.dots { position: absolute; bottom: 0; display: flex; gap: 2px; }
.dots b { width: 6px; height: 6px; border-radius: 50%; background: #e95420; }
.grid { margin-left: auto; }
```
